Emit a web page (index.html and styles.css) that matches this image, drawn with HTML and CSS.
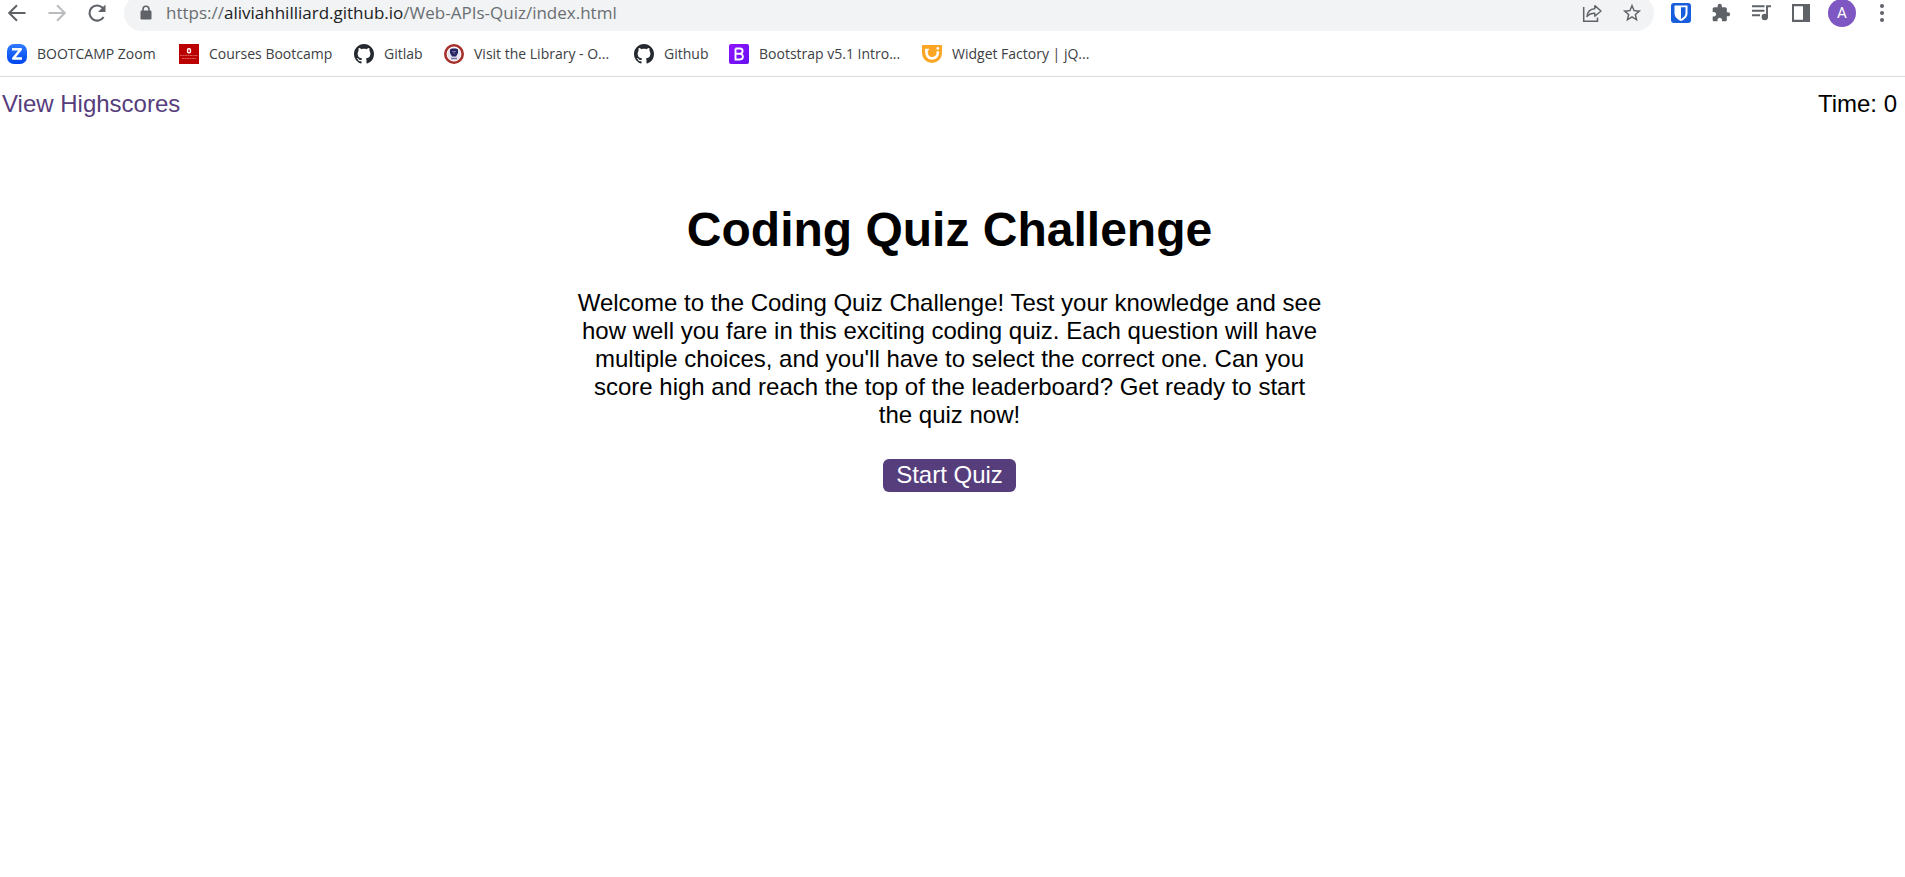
FILE: index.html
```html
<!DOCTYPE html>
<html lang="en">
<head>
<meta charset="utf-8">
<title>Coding Quiz Challenge</title>
<link rel="stylesheet" href="styles.css">
</head>
<body>
<div class="browser">
  <div class="toolbar">
    <div class="nav">
      <button class="icon-btn" aria-label="Back"><svg width="24" height="24" viewBox="0 0 24 24"><path d="M20.500 12H4.500M12 4.200L4.200 12L12 19.800" fill="none" stroke="#5f6368" stroke-width="2"/></svg></button>
      <button class="icon-btn" aria-label="Forward"><svg width="24" height="24" viewBox="0 0 24 24"><path d="M3.500 12H19.500M12 4.200L19.800 12L12 19.800" fill="none" stroke="#babcbe" stroke-width="2"/></svg></button>
      <button class="icon-btn" aria-label="Reload"><svg width="24" height="24" viewBox="0 0 24 24"><path d="M18.600 16A7.600 7.600 0 1 1 17.600 6.800L19 8.300" fill="none" stroke="#5f6368" stroke-width="2.100"/><path d="M20.500 3.500V11H13z" fill="#5f6368"/></svg></button>
    </div>
    <div class="address">
      <svg class="lock" width="12" height="16" viewBox="0 0 12 16"><path d="M3 7V4.300a3 3 0 0 1 6 0V7" fill="none" stroke="#5f6368" stroke-width="1.600"/><rect x="0.500" y="5.500" width="11" height="9" rx="1.200" fill="#5f6368"/></svg>
      <span class="url">https://<b>aliviahhilliard.github.io</b>/Web-APIs-Quiz/index.html</span>
      <button class="icon-btn" aria-label="Share"><svg width="24" height="24" viewBox="0 0 24 24"><path d="M3.700 6V20.300H17.500V16.500" fill="none" stroke="#5f6368" stroke-width="1.500"/><path d="M7 15.500C7.500 10.500 10.200 8 14.800 7.800V4.600L21 10L14.800 15.300V12.300C11.500 12.200 9 13.200 7 15.500Z" fill="none" stroke="#5f6368" stroke-width="1.400" stroke-linejoin="round"/></svg></button>
      <button class="icon-btn" aria-label="Bookmark this page"><svg width="22" height="22" viewBox="0 0 24 24"><path fill="#5f6368" d="M22 9.240l-7.190-.62L12 2 9.190 8.630 2 9.240l5.460 4.730L5.820 21 12 17.270 18.180 21l-1.630-7.030L22 9.240zM12 15.400l-3.760 2.270 1-4.280-3.320-2.880 4.380-.38L12 6.100l1.710 4.040 4.380.38-3.320 2.880 1 4.280L12 15.400z"/></svg></button>
    </div>
    <div class="extensions">
      <button class="icon-btn" aria-label="Password manager"><svg width="22" height="22" viewBox="0 0 22 22"><rect x="1" y="1" width="20" height="20" rx="3" fill="#175ddc"/><path d="M4.500 3.500H17.500V11C17.500 15 14.500 17.500 11 19C7.500 17.500 4.500 15 4.500 11Z" fill="#fff"/><path d="M11 5.300H15.500V11C15.500 13.800 13.500 15.700 11 16.900Z" fill="#175ddc"/></svg></button>
      <button class="icon-btn" aria-label="Extensions"><svg width="20" height="20" viewBox="0 0 24 24"><path fill="#5f6368" d="M20.500 11H19V7c0-1.100-.9-2-2-2h-4V3.500C13 2.120 11.880 1 10.500 1S8 2.120 8 3.500V5H4c-1.100 0-1.990.9-1.990 2v3.800H3.500c1.490 0 2.700 1.210 2.700 2.700s-1.210 2.700-2.700 2.700H2V20c0 1.100.9 2 2 2h3.800v-1.500c0-1.490 1.210-2.700 2.700-2.700 1.490 0 2.700 1.210 2.700 2.700V22H17c1.100 0 2-.9 2-2v-4h1.500c1.380 0 2.500-1.120 2.500-2.500S21.880 11 20.500 11z"/></svg></button>
      <button class="icon-btn" aria-label="Media controls"><svg width="22" height="22" viewBox="0 0 22 22"><path d="M2 4.200H14.500M2 8.700H14.500M2 13.200H10M17 15V4.200H21" fill="none" stroke="#5f6368" stroke-width="1.900"/><circle cx="14.800" cy="15" r="3.200" fill="#5f6368"/></svg></button>
      <button class="icon-btn" aria-label="Side panel"><svg width="20" height="20" viewBox="0 0 20 20"><path fill="#5f6368" fill-rule="evenodd" d="M1 1H19V19H1ZM3 3.300V16.700H12V3.300Z"/></svg></button>
      <button class="avatar" aria-label="Profile A">A</button>
      <button class="icon-btn" aria-label="Menu"><svg width="22" height="22" viewBox="0 0 22 22"><g fill="#5f6368"><circle cx="11" cy="4" r="2"/><circle cx="11" cy="11" r="2"/><circle cx="11" cy="18" r="2"/></g></svg></button>
    </div>
  </div>
  <nav class="bookmarks" aria-label="Bookmarks">
    <a href="#"><svg width="20" height="20" viewBox="0 0 20 20"><defs><linearGradient id="zoom" x2="0" y2="1"><stop offset="0" stop-color="#2f7bff"/><stop offset="1" stop-color="#0044ef"/></linearGradient></defs><rect width="20" height="20" rx="7" fill="url(#zoom)"/><path d="M5 5.300H13.800L6.200 14.600H15" fill="none" stroke="#fff" stroke-width="2.500" stroke-linejoin="round"/></svg><span>BOOTCAMP Zoom</span></a>
    <a href="#"><svg width="20" height="20" viewBox="0 0 20 20"><rect width="20" height="20" fill="#b00"/><rect x="8.600" y="4.700" width="2.800" height="4" rx="1" fill="none" stroke="#fff" stroke-width="1.400"/><path d="M1 11.500H19M3 14.500H17" stroke="#d65a5a" stroke-width="1" stroke-dasharray="2 .5"/></svg><span>Courses Bootcamp</span></a>
    <a href="#"><svg width="20" height="20" viewBox="0 0 16 16"><path fill="#24292f" d="M8 0C3.580 0 0 3.580 0 8c0 3.540 2.290 6.530 5.470 7.590.4.070.55-.17.55-.38 0-.19-.01-.82-.01-1.490-2.010.37-2.530-.49-2.690-.94-.09-.23-.48-.94-.82-1.130-.28-.15-.68-.52-.01-.53.63-.01 1.080.58 1.230.82.72 1.210 1.870.87 2.330.66.070-.52.280-.87.510-1.070-1.780-.2-3.640-.89-3.640-3.950 0-.87.310-1.590.820-2.150-.08-.2-.36-1.020.080-2.120 0 0 .67-.21 2.200.82.640-.18 1.320-.27 2-.27s1.360.09 2 .27c1.530-1.040 2.200-.82 2.200-.82.440 1.100.160 1.920.080 2.120.510.560.820 1.270.820 2.150 0 3.070-1.870 3.750-3.650 3.950.290.250.540.730.540 1.480 0 1.070-.01 1.930-.01 2.200 0 .21.150.46.550.38A8.010 8.010 0 0 0 16 8c0-4.420-3.580-8-8-8z"/></svg><span>Gitlab</span></a>
    <a href="#"><svg width="20" height="20" viewBox="0 0 20 20"><circle cx="10" cy="10" r="8.700" fill="#fff" stroke="#a6302c" stroke-width="2.600"/><circle cx="10" cy="10" r="6.600" fill="#e6e4ef"/><path d="M6 5.500L8 4.500H12L14 5.500V9L12 12.500H8L6 9Z" fill="#272463"/><path d="M8 7.500H12M10 7V10" stroke="#77739e"/><path d="M7 14.500H13" stroke="#77739e" stroke-width="1.500"/></svg><span>Visit the Library - O...</span></a>
    <a href="#"><svg width="20" height="20" viewBox="0 0 16 16"><path fill="#24292f" d="M8 0C3.580 0 0 3.580 0 8c0 3.540 2.290 6.530 5.470 7.590.4.070.55-.17.55-.38 0-.19-.01-.82-.01-1.490-2.010.37-2.530-.49-2.690-.94-.09-.23-.48-.94-.82-1.130-.28-.15-.68-.52-.01-.53.63-.01 1.080.58 1.230.82.72 1.210 1.870.87 2.330.66.070-.52.280-.87.510-1.070-1.780-.2-3.640-.89-3.640-3.950 0-.87.310-1.590.820-2.150-.08-.2-.36-1.020.080-2.120 0 0 .67-.21 2.200.82.640-.18 1.320-.27 2-.27s1.360.09 2 .27c1.530-1.040 2.200-.82 2.200-.82.440 1.100.160 1.920.080 2.120.510.560.820 1.270.820 2.150 0 3.070-1.870 3.750-3.650 3.950.290.250.540.730.540 1.480 0 1.070-.01 1.930-.01 2.200 0 .21.150.46.550.38A8.010 8.010 0 0 0 16 8c0-4.420-3.580-8-8-8z"/></svg><span>Github</span></a>
    <a href="#"><svg width="20" height="20" viewBox="0 0 20 20"><defs><linearGradient id="boot" x2="1" y2="1"><stop offset="0" stop-color="#9013fe"/><stop offset="1" stop-color="#6610f2"/></linearGradient></defs><rect width="20" height="20" rx="2" fill="url(#boot)"/><path d="M6.500 4.500H11A2.600 2.600 0 0 1 11 9.700H6.500M11 9.700A2.900 2.900 0 0 1 11 15.500H6.500V4.500" fill="none" stroke="#fff" stroke-width="1.900"/></svg><span>Bootstrap v5.1 Intro...</span></a>
    <a href="#"><svg width="20" height="20" viewBox="0 0 20 20"><path d="M1 1H19Q20 1 20 2V9A10 10 0 0 1 0 9V2Q0 1 1 1Z" fill="#faa523"/><path d="M4.500 5V8.500A5.500 5.500 0 0 0 15.800 9V7.200" fill="none" stroke="#fff" stroke-width="2.600"/><path d="M3.200 5.500H7" stroke="#fff" stroke-width="1.500"/><circle cx="15.800" cy="4.400" r="1.400" fill="#fff"/></svg><span>Widget Factory | jQ...</span></a>
  </nav>
</div>
<header class="quiz-header">
  <a href="#">View Highscores</a>
  <div>Time: 0</div>
</header>
<main class="quiz">
  <h1>Coding Quiz Challenge</h1>
  <p>Welcome to the Coding Quiz Challenge! Test your knowledge and see how well you fare in this exciting coding quiz. Each question will have multiple choices, and you'll have to select the correct one. Can you score high and reach the top of the leaderboard? Get ready to start the quiz now!</p>
  <button class="start">Start Quiz</button>
</main>
</body>
</html>
```
FILE: styles.css
```css
* { box-sizing: border-box; }
body {
  margin: 0;
  background: #fff;
  color: #000;
  font: 24px/28px "Liberation Sans", Arial, sans-serif;
}
button { border: 0; padding: 0; cursor: pointer; }
svg { display: block; flex: none; }

.browser {
  border-bottom: 1px solid #dadce0;
  font-family: "Open Sans", "Noto Sans", sans-serif;
  overflow: hidden;
}
.toolbar {
  display: flex;
  align-items: center;
  height: 36px;
  margin-top: -5px;
}
.icon-btn {
  display: grid;
  place-items: center;
  width: 40px;
  height: 36px;
  background: none;
}
.nav { display: flex; width: 124px; margin-left: -3px; }
.address {
  display: flex;
  align-items: center;
  flex: 1;
  height: 36px;
  margin-left: 3px;
  padding: 0 2px 0 16px;
  border-radius: 18px;
  background: #f1f3f4;
}
.url {
  flex: 1;
  padding-left: 14px;
  color: #6a6e72;
  font-size: 17px;
  line-height: 24px;
  white-space: nowrap;
}
.url b { color: #202124; font-weight: 400; }
.extensions {
  display: flex;
  align-items: center;
  margin-left: 7px;
  padding-right: 3px;
}
.avatar {
  width: 28px;
  height: 28px;
  margin: 0 6px 0 7px;
  border-radius: 50%;
  background: #7e57c2;
  color: #fff;
  font: 15px/28px Roboto, sans-serif;
}
.bookmarks {
  display: grid;
  grid-template-columns: 172px 175px 90px 190px 95px 193px auto;
  height: 45px;
  padding-left: 7px;
  justify-content: start;
  align-items: center;
}
.bookmarks a {
  display: flex;
  align-items: center;
  gap: 10px;
  color: #3c4043;
  font-size: 14px;
  line-height: 20px;
  text-decoration: none;
  white-space: nowrap;
}

.quiz-header {
  display: flex;
  justify-content: space-between;
  padding: 13px 8px 0 2px;
}
.quiz-header a { color: #563d7c; text-decoration: none; }
.quiz {
  max-width: 754px;
  margin: 0 auto;
  padding: 84px 6px 0 0;
  text-align: center;
}
h1 { margin: 0 0 31px; font-size: 48px; line-height: 56px; }
p { margin: 0 0 30px; }
.start {
  padding: 2px 13px 3px;
  border-radius: 6px;
  background: #563d7c;
  color: #fff;
  font: inherit;
}
```
